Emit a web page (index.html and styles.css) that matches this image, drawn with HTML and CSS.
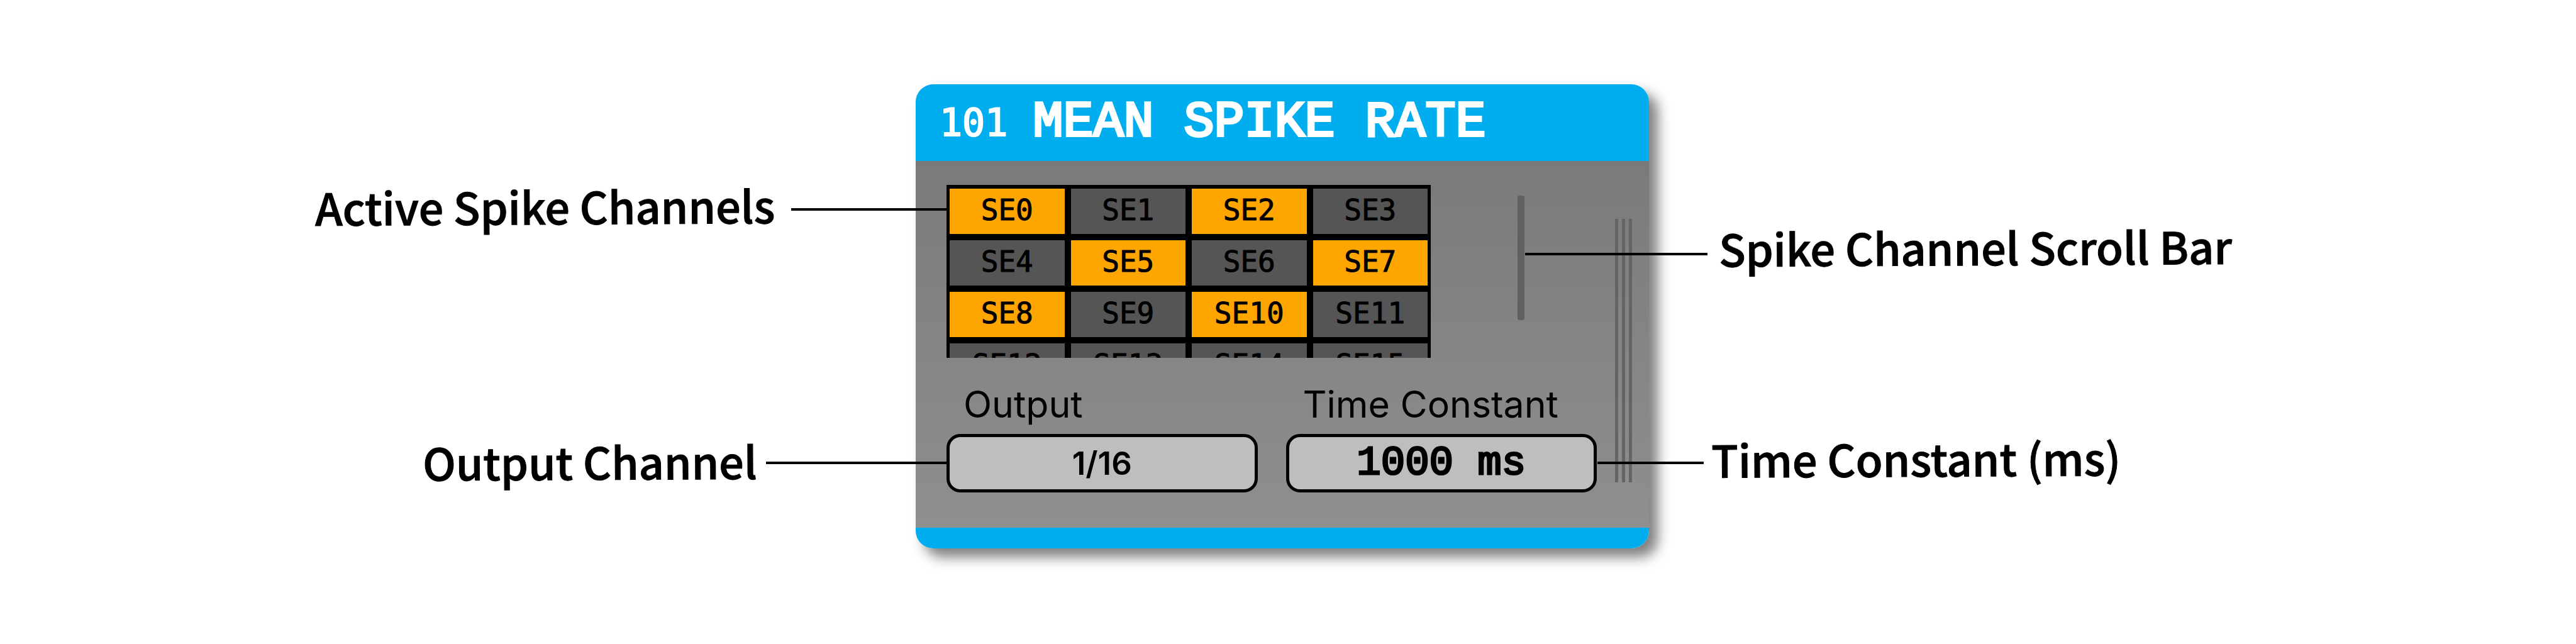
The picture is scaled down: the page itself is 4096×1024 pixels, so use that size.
FILE: index.html
```html
<!DOCTYPE html>
<html lang="en">
<head>
<meta charset="utf-8">
<title>Mean Spike Rate</title>
<link rel="stylesheet" href="styles.css">
</head>
<body>
<main class="figure">
  <div class="callouts callouts-left">
    <div class="callout callout-active"><span class="callout-text">Active Spike Channels</span><span class="leader"></span></div>
    <div class="callout callout-output"><span class="callout-text">Output Channel</span><span class="leader"></span></div>
  </div>

  <section class="panel">
    <header class="panel-header">
      <span class="panel-id">101</span>
      <h1 class="panel-title">MEAN SPIKE RATE</h1>
    </header>
    <div class="panel-body">
      <div class="controls">
        <div class="channel-view">
          <div class="channels">
            <button class="channel on" type="button" aria-pressed="true">SE0</button>
            <button class="channel" type="button" aria-pressed="false">SE1</button>
            <button class="channel on" type="button" aria-pressed="true">SE2</button>
            <button class="channel" type="button" aria-pressed="false">SE3</button>
            <button class="channel" type="button" aria-pressed="false">SE4</button>
            <button class="channel on" type="button" aria-pressed="true">SE5</button>
            <button class="channel" type="button" aria-pressed="false">SE6</button>
            <button class="channel on" type="button" aria-pressed="true">SE7</button>
            <button class="channel on" type="button" aria-pressed="true">SE8</button>
            <button class="channel" type="button" aria-pressed="false">SE9</button>
            <button class="channel on" type="button" aria-pressed="true">SE10</button>
            <button class="channel" type="button" aria-pressed="false">SE11</button>
            <button class="channel" type="button" aria-pressed="false">SE12</button>
            <button class="channel" type="button" aria-pressed="false">SE13</button>
            <button class="channel" type="button" aria-pressed="false">SE14</button>
            <button class="channel" type="button" aria-pressed="false">SE15</button>
          </div>
          <div class="scroll-thumb"></div>
        </div>
        <div class="fields">
          <div class="field">
            <label class="field-label" for="output">Output</label>
            <select class="field-box" id="output"><option>1/16</option></select>
          </div>
          <div class="field">
            <label class="field-label" for="time">Time Constant</label>
            <input class="field-box field-mono" id="time" type="text" value="1000 ms">
          </div>
        </div>
      </div>
      <div class="grip"><span></span><span></span><span></span></div>
    </div>
    <footer class="panel-footer"></footer>
  </section>

  <div class="callouts callouts-right">
    <div class="callout callout-scroll"><span class="leader"></span><span class="callout-text">Spike Channel Scroll Bar</span></div>
    <div class="callout callout-time"><span class="leader"></span><span class="callout-text">Time Constant (ms)</span></div>
  </div>
</main>
</body>
</html>
```

FILE: styles.css
```css
* {
  box-sizing: border-box;
}

body {
  margin: 0;
  background: #fff;
  color: #000;
  font-family: "Inter", sans-serif;
}

.figure {
  display: grid;
  grid-template-columns: 1456fr 1166fr 1474fr;
  align-items: start;
  min-height: 100vh;
  padding-bottom: 60px;
}

/* Callouts */
.callouts {
  display: flex;
  flex-direction: column;
  z-index: 1;
}

.callouts-left {
  padding-top: 287px;
  gap: 326px;
  margin-right: -50px;
}

.callouts-right {
  padding-top: 352px;
  gap: 256px;
}

.callout {
  display: flex;
  align-items: flex-start;
  height: 80px;
}

.callouts-left .callout {
  justify-content: flex-end;
}

.callout-text {
  font: 500 70px/80px "Noto Sans CJK SC", sans-serif;
  -webkit-text-stroke: 1px #000;
  white-space: nowrap;
  transform: rotate(-0.3deg);
}

.leader {
  flex: none;
  height: 4px;
  background: #000;
}

.callout-active {
  gap: 26px;
}

.callout-active .leader {
  width: 248px;
  margin-top: 44px;
}

.callout-output {
  gap: 14px;
}

.callout-output .leader {
  width: 288px;
  margin-top: 41px;
}

.callout-scroll {
  gap: 18px;
  margin-left: -197px;
}

.callout-scroll .leader {
  width: 290px;
  margin-top: 50px;
}

.callout-time {
  gap: 12px;
  margin-left: -82px;
}

.callout-time .leader {
  width: 169px;
  margin-top: 46px;
}

/* Processor panel */
.panel {
  margin-top: 134px;
  border-radius: 28px;
  box-shadow: 14px 14px 20px rgba(0, 0, 0, 0.5);
}

.panel-header {
  display: flex;
  align-items: baseline;
  gap: 40px;
  height: 122px;
  padding: 16px 38px 0;
  border-radius: 28px 28px 0 0;
  background: #00adef;
  color: #fff;
}

.panel-id {
  font: 400 60px/90px "DejaVu Sans Mono", monospace;
  -webkit-text-stroke: 2px #fff;
}

.panel-title {
  margin: 0;
  font: 400 80px/90px "Liberation Mono", monospace;
  -webkit-text-stroke: 4px #fff;
  white-space: nowrap;
}

.panel-body {
  display: flex;
  align-items: flex-start;
  gap: 29px;
  padding: 38px 27px 56px 49px;
  background: linear-gradient(#7a7a7a, #8f8f8f);
}

.panel-footer {
  height: 33px;
  border-radius: 0 0 28px 28px;
  background: #00adef;
}

.controls {
  flex: 1;
}

/* Channel grid */
.channel-view {
  display: flex;
  align-items: flex-start;
  gap: 138px;
  padding-right: 115px;
}

.channels {
  flex: 1;
  display: grid;
  grid-template-columns: repeat(4, 1fr);
  grid-auto-rows: 72px;
  gap: 10px;
  height: 275px;
  padding: 6px 5px 0;
  overflow: hidden;
  background: #000;
}

.channel {
  padding: 0 0 5px;
  border: 0;
  background: #555;
  color: #000;
  font: 400 46px/64px "DejaVu Sans Mono", monospace;
  -webkit-text-stroke: 1px #000;
}

.channel.on {
  background: #ffa500;
}

.scroll-thumb {
  width: 11px;
  height: 198px;
  margin-top: 17px;
  border-radius: 3px;
  background: #606060;
}

/* Fields */
.fields {
  display: flex;
  gap: 45px;
  margin-top: 38px;
}

.field {
  flex: 1;
  min-width: 0;
}

.field-label {
  display: block;
  margin: 0 0 11px 27px;
  font-size: 59px;
  line-height: 72px;
}

.field-box {
  display: block;
  width: 100%;
  height: 93px;
  margin: 0;
  padding: 0;
  border: 5px solid #000;
  border-radius: 22px;
  background: #bebebe;
  color: #000;
  font: 600 51px/80px "Inter", sans-serif;
  text-align: center;
  text-align-last: center;
  appearance: none;
}

.field-mono {
  font: 400 64px/80px "Liberation Mono", monospace;
  -webkit-text-stroke: 3px #000;
}

.grip {
  display: flex;
  gap: 6px;
  height: 419px;
  margin-top: 54px;
}

.grip span {
  width: 5px;
  background: #646464;
}
```
